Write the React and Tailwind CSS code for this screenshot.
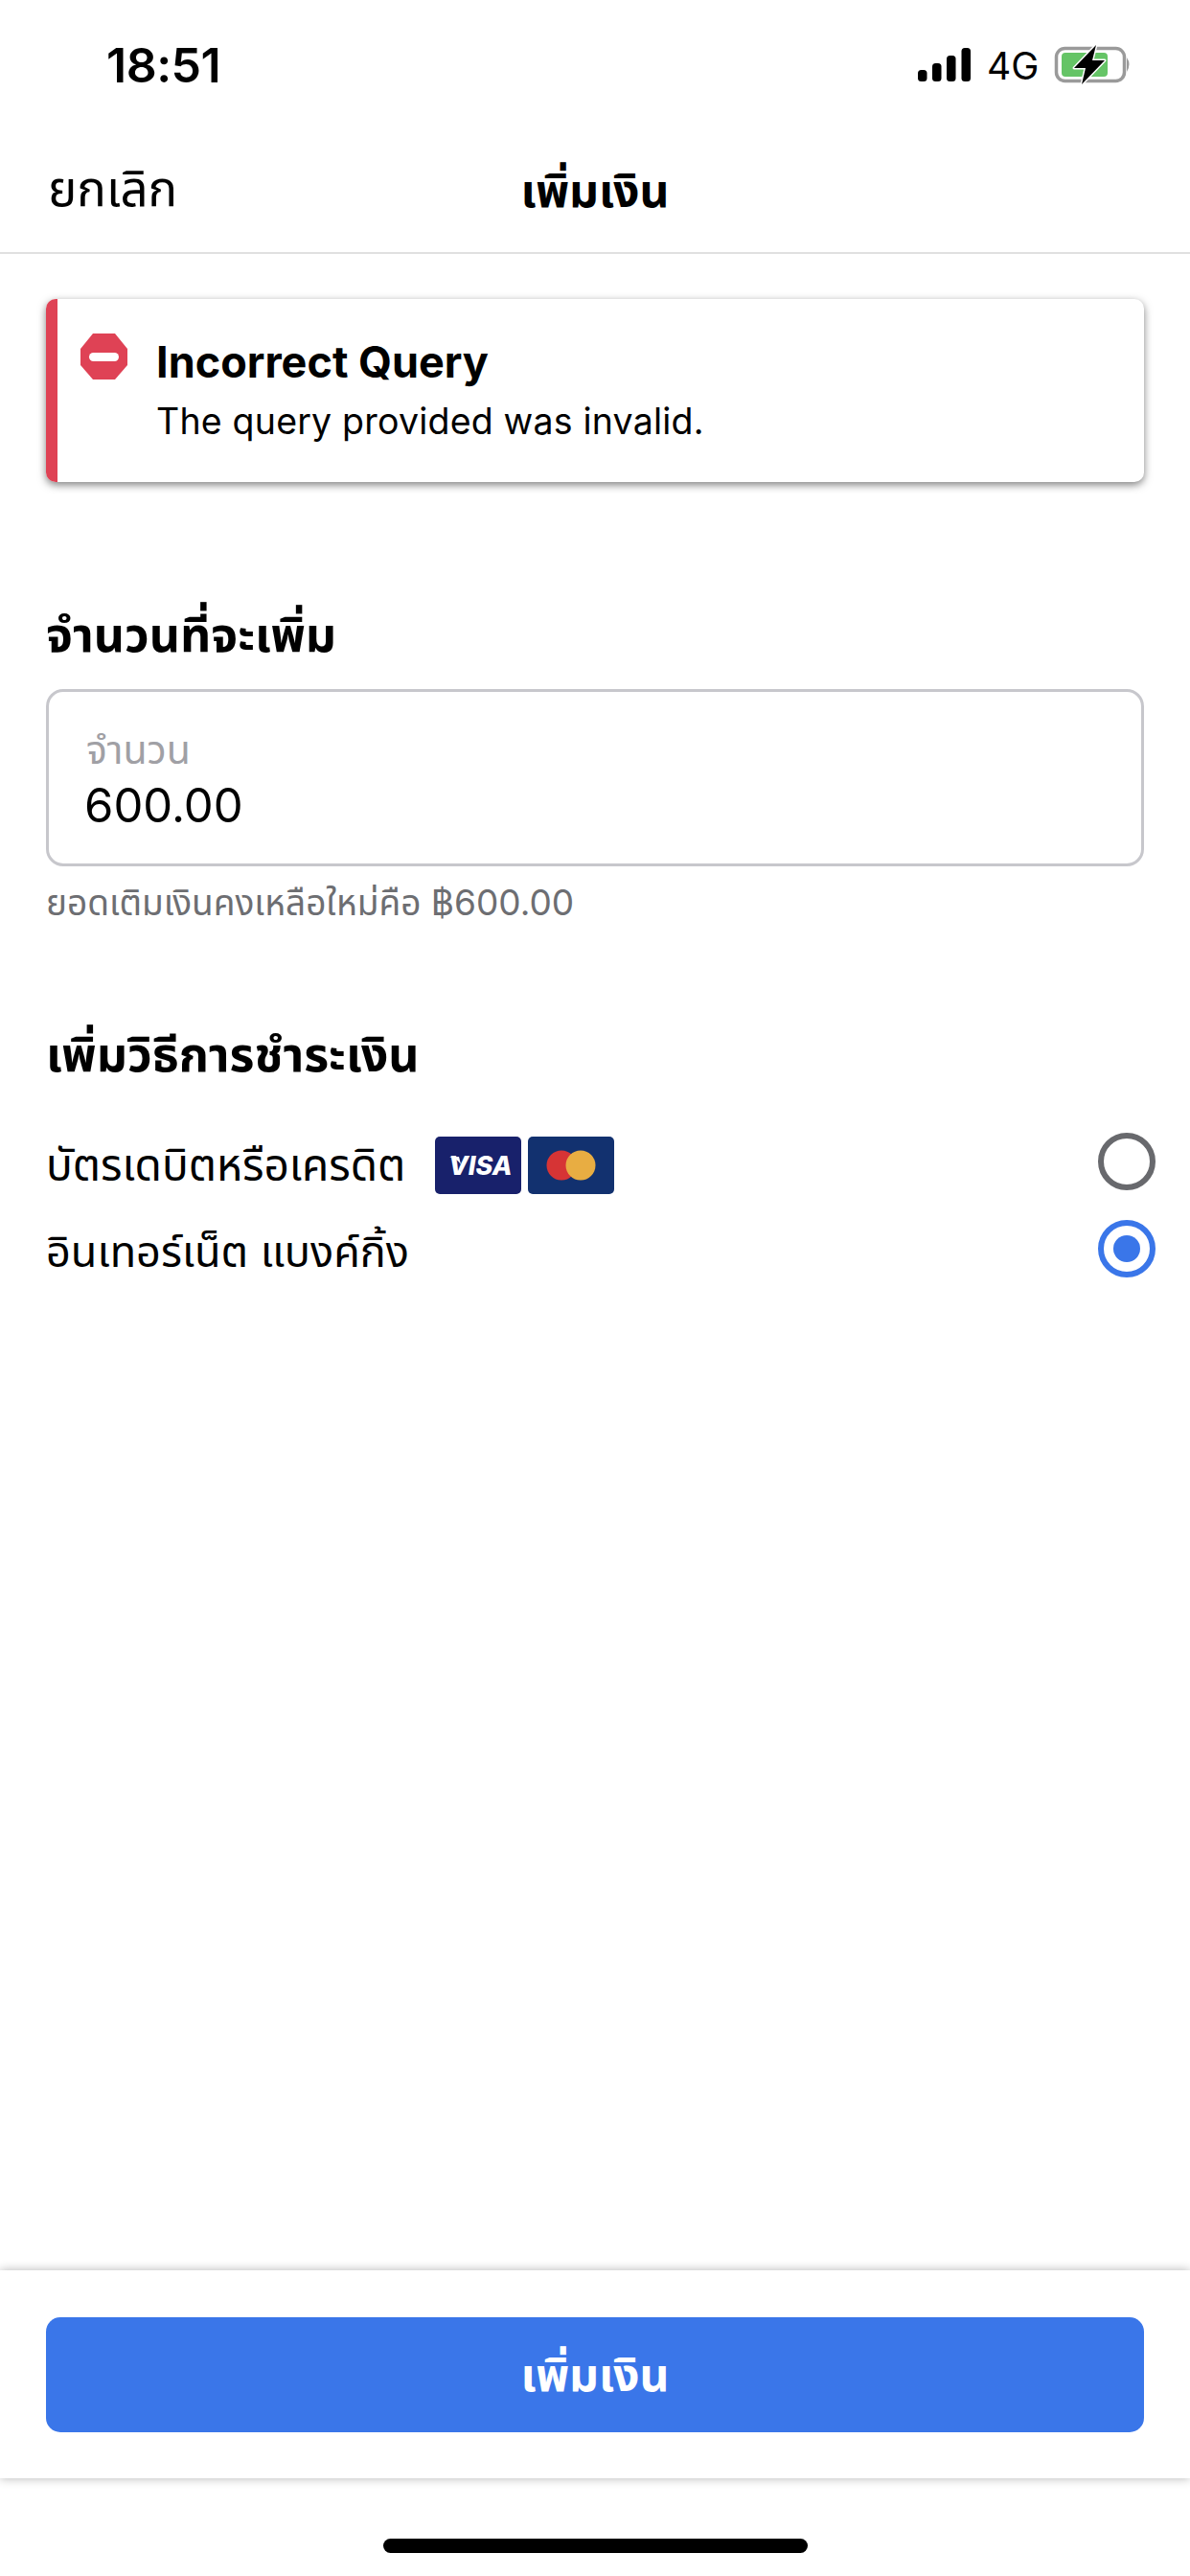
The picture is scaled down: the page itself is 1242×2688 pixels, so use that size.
const thai = "font-['Inter','Noto_Sans_Thai','Noto_Sans','Liberation_Sans',sans-serif]";

function StatusIcons() {
  return (
    <svg width="270" height="80" viewBox="0 0 270 80" fill="none">
      <rect x="28" y="43" width="9.5" height="12" rx="3.5" fill="#000" />
      <rect x="43" y="36" width="9.5" height="19" rx="3.5" fill="#000" />
      <rect x="58" y="28" width="9.5" height="27" rx="3.5" fill="#000" />
      <rect x="73.500" y="20" width="9.5" height="35" rx="3.5" fill="#000" />
      <rect x="172.500" y="20.500" width="71" height="34" rx="9" stroke="#9a9a9a" strokeWidth="3.500" />
      <rect x="178" y="25" width="48" height="25" rx="4" fill="#65c466" />
      <path d="M246 30 Q251 37 246 45 Z" fill="#9a9a9a" />
      <path d="M214 17 L191 41 L203 41 L199 58 L223 33 L210 33 Z" fill="#000" stroke="#fff" strokeWidth="3" strokeLinejoin="round" paintOrder="stroke" />
    </svg>
  );
}

function Radio({ on }) {
  return on ? (
    <div className="flex size-[60px] items-center justify-center rounded-full border-[6px] border-[#3a76e9]">
      <div className="size-[28px] rounded-full bg-[#3a76e9]" />
    </div>
  ) : (
    <div className="size-[60px] rounded-full border-[6px] border-[#68696d]" />
  );
}

export default function App() {
  return (
    <div className={`flex h-[2688px] w-[1242px] flex-col overflow-hidden bg-white text-black ${thai}`}>
      <div className="relative flex h-[140px] items-start justify-between">
        <div className="pl-[111px] pt-[38px] text-[50px] font-semibold leading-[60px] tracking-[-0.5px]">18:51</div>
        <div className="relative mr-[42px] mt-[30px] h-[80px] w-[270px]">
          <StatusIcons />
          <span className="absolute left-[100px] top-[16px] text-[39px] font-normal leading-[46px]">4G</span>
        </div>
      </div>

      <div className="relative flex h-[125px] items-center justify-center border-b-2 border-[#e0e0e0]">
        <span className="absolute left-[50px] top-[27px] text-[51px] leading-[60px]">ยกเลิก</span>
        <span className="pb-[6px] text-[48px] font-bold leading-[60px]">เพิ่มเงิน</span>
      </div>

      <div className="flex flex-1 flex-col px-[48px]">
        <div className="mt-[47px] flex h-[191px] overflow-hidden rounded-[10px] bg-white shadow-[0_3px_9px_rgba(0,0,0,0.5)]">
          <div className="w-[12px] bg-[#df4255]" />
          <div className="pl-[24px] pt-[36px]">
            <svg width="49" height="48" viewBox="0 0 49 48">
              <path d="M13 0 H36 L49 16 V33 L36 48 H13 L0 33 V16 Z" fill="#df4255" />
              <rect x="9" y="20" width="31" height="9" rx="4.500" fill="#fff" />
            </svg>
          </div>
          <div className="pl-[30px] pt-[41px]">
            <div className="text-[45px] font-bold leading-[50px]">Incorrect Query</div>
            <div className="mt-[14px] text-[37.500px] leading-[46px] tracking-[0.2px]">The query provided was invalid.</div>
          </div>
        </div>

        <div className="mt-[129px] text-[50px] font-bold leading-[60px]">จำนวนที่จะเพิ่ม</div>
        <div className="mt-[27px] flex h-[185px] flex-col rounded-[18px] border-[3px] border-[#c7c7cc] pl-[37px] pt-[35px]">
          <div className="pl-[2px] text-[41px] leading-[50px] text-[#a0a0a5]">จำนวน</div>
          <div className="pt-[4px] text-[49px] leading-[60px]">600.00</div>
        </div>
        <div className="mt-[13px] text-[37px] leading-[50px] text-[#6d6e72]">ยอดเติมเงินคงเหลือใหม่คือ ฿600.00</div>

        <div className="mt-[103px] text-[50px] font-bold leading-[60px]">เพิ่มวิธีการชำระเงิน</div>

        <div className="mt-[52px] flex h-[60px] items-center justify-between">
          <div className="flex items-center">
            <span className="pt-[6px] text-[46px] leading-[60px]">บัตรเดบิตหรือเครดิต</span>
            <div className="ml-[31px] mt-[8px] flex gap-[7px]">
              <div className="relative flex h-[60px] w-[90px] items-center justify-center rounded-[5px] bg-[#18216b]">
                <svg className="absolute left-[15px] top-[21px]" width="12" height="10" viewBox="0 0 12 10">
                  <path d="M0 0 H10 L12 8 Q8 2 0 0 Z" fill="#fff" />
                </svg>
                <span className="pl-[4px] text-[27px] font-extrabold italic leading-none text-white">VISA</span>
              </div>
              <div className="flex h-[60px] w-[90px] items-center justify-center rounded-[5px] bg-[#12316f]">
                <svg width="52" height="32" viewBox="0 0 52 32">
                  <circle cx="16" cy="16" r="15.500" fill="#d63435" />
                  <circle cx="36" cy="16" r="15.500" fill="#e8ad42" />
                </svg>
              </div>
            </div>
          </div>
          <div className="mr-[-12px]"><Radio /></div>
        </div>
        <div className="mt-[31px] flex h-[60px] items-center justify-between">
          <span className="pt-[6px] text-[45px] leading-[60px]">อินเทอร์เน็ต แบงค์กิ้ง</span>
          <div className="mr-[-12px]"><Radio on /></div>
        </div>
      </div>

      <div className="flex h-[217px] flex-col bg-white px-[48px] pt-[49px] shadow-[0_0_10px_rgba(0,0,0,0.3)]">
        <div className="flex h-[120px] items-center justify-center rounded-[15px] bg-[#3a76e9] text-[48px] font-bold leading-[60px] text-white">เพิ่มเงิน</div>
      </div>
      <div className="flex h-[102px] justify-center pt-[63px]">
        <div className="h-[15px] w-[443px] rounded-full bg-black" />
      </div>
    </div>
  );
}
